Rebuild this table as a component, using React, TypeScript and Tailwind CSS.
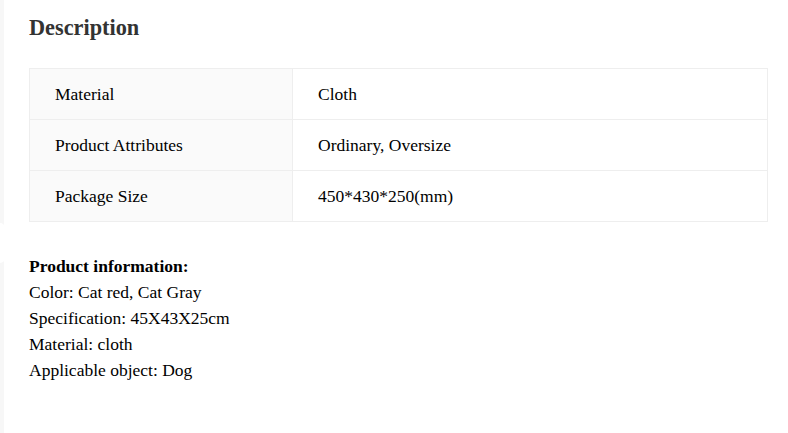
import React from 'react';

const specs = [
  { label: 'Material', value: 'Cloth' },
  { label: 'Product Attributes', value: 'Ordinary, Oversize' },
  { label: 'Package Size', value: '450*430*250(mm)' },
];

const info = [
  'Color: Cat red, Cat Gray',
  'Specification: 45X43X25cm',
  'Material: cloth',
  'Applicable object: Dog',
];

const App: React.FC = () => {
  return (
    <div className="relative flex min-h-[433px] w-full bg-white [font-family:Liberation_Serif,Times_New_Roman,serif] text-black">
      {/* thin side rail */}
      <div className="w-[4px] shrink-0 bg-[#f7f7f7]" />
      <div className="absolute left-0 top-[223px] h-[40px] w-[5px] rounded-r-full bg-white" />

      <div className="flex-1 pl-[25px] pr-[20px] pt-[13px]">
        <h2 className="text-[22.3px] font-bold leading-[30px] text-[#333]">Description</h2>

        <div className="mt-[25px] border-x border-t border-[#eeeeee]">
          {specs.map(row => (
            <div key={row.label} className="flex h-[51px] border-b border-[#eeeeee]">
              <div className="flex w-[263px] shrink-0 items-center border-r border-[#eeeeee] bg-[#fafafa] pl-[25px] text-[17.5px]">
                {row.label}
              </div>
              <div className="flex flex-1 items-center pl-[25px] text-[17.5px]">{row.value}</div>
            </div>
          ))}
        </div>

        <div className="mt-[31px] text-[17.5px] leading-[26px]">
          <p className="font-bold">Product information:</p>
          {info.map(line => (
            <p key={line}>{line}</p>
          ))}
        </div>
      </div>
    </div>
  );
};

export default App;
